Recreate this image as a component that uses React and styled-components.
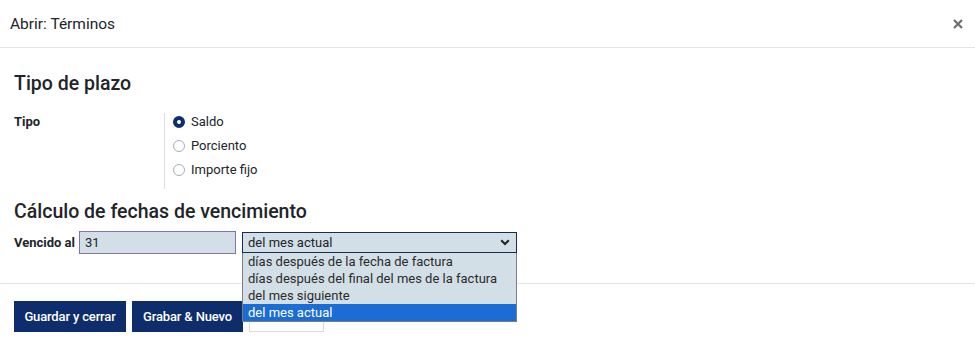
import React from "react";
import styled, { createGlobalStyle } from "styled-components";

const Global = createGlobalStyle`
  html, body { margin: 0; padding: 0; background: #fff; }
  body { font-family: Roboto, "Liberation Sans", Arial, sans-serif; color: #212529; }
  * { box-sizing: border-box; }
`;

const Modal = styled.div`
  width: 975px;
  height: 348px;
  background: #fff;
  overflow: hidden;
`;

const Header = styled.div`
  height: 48px;
  display: flex;
  align-items: center;
  justify-content: space-between;
  padding: 1px 11px 0 10px;
  border-bottom: 1px solid #e2e4e8;
`;

const Title = styled.div`
  font-size: 15.5px;
  font-weight: 400;
  color: #212529;
`;

const Close = styled.button`
  border: 0;
  background: none;
  padding: 0;
  width: 12px;
  height: 12px;
  display: flex;
  align-items: center;
  justify-content: center;
  cursor: pointer;
`;

const Body = styled.div`
  padding: 24px 14px 29px;
`;

const SectionTitle = styled.h2`
  margin: ${(p) => p.$mt || 0}px 0 0;
  font-size: 19.5px;
  line-height: 23px;
  font-weight: 500;
  color: #212529;
`;

const FieldRow = styled.div`
  display: grid;
  grid-template-columns: 150px 1fr;
  margin-top: 18px;
`;

const Label = styled.div`
  font-size: 13px;
  line-height: 18px;
  font-weight: 700;
  color: #212529;
`;

const RadioGroup = styled.div`
  border-left: 1px solid #dcdfe3;
  padding: 0 0 10px 8px;
  display: flex;
  flex-direction: column;
  gap: 6px;
`;

const RadioRow = styled.label`
  display: flex;
  align-items: center;
  gap: 6px;
  font-size: 13px;
  line-height: 18px;
  color: #212529;
`;

const RadioDot = styled.span`
  width: 12px;
  height: 12px;
  border-radius: 50%;
  flex: none;
  border: ${(p) => (p.$checked ? "4px solid #0d2d6c" : "1px solid #a9adb3")};
  background: #fff;
`;

const DueRow = styled.div`
  display: flex;
  align-items: flex-start;
  margin-top: 8px;
`;

const DueLabel = styled(Label)`
  line-height: 23px;
  margin-right: 4px;
`;

const NumberInput = styled.div`
  width: 157px;
  height: 23px;
  background: #d2dfe6;
  border: 1px solid #7f74ad;
  font-size: 13px;
  line-height: 21px;
  padding-left: 5px;
  color: #212529;
`;

const SelectWrap = styled.div`
  position: relative;
  margin-left: 6px;
  margin-top: 1px;
`;

const SelectBox = styled.div`
  width: 275px;
  height: 21px;
  background: #d2dfe6;
  border: 1px solid #1b2a52;
  display: flex;
  align-items: center;
  justify-content: space-between;
  padding: 0 6px 0 5px;
  font-size: 13px;
  color: #212529;
`;

const Options = styled.ul`
  position: absolute;
  left: 0;
  top: 21px;
  width: 275px;
  margin: 0;
  padding: 0;
  list-style: none;
  background: #d2dfe6;
  border: 1px solid #7a7d82;
  border-top: 0;
  z-index: 5;
`;

const Option = styled.li`
  height: 17px;
  line-height: 17px;
  padding-left: 5px;
  font-size: 13px;
  color: ${(p) => (p.$selected ? "#fff" : "#2b2b2b")};
  background: ${(p) => (p.$selected ? "#1c6cd6" : "transparent")};
`;

const Footer = styled.div`
  border-top: 1px solid #e2e4e8;
  padding: 17px 14px;
  display: flex;
  gap: 6px;
`;

const Button = styled.button`
  height: 31px;
  width: ${(p) => p.$w}px;
  padding: 0;
  border: 1px solid ${(p) => (p.$light ? "#d9dcdf" : "#0d2d6c")};
  background: ${(p) => (p.$light ? "#fff" : "#0d2d6c")};
  color: ${(p) => (p.$light ? "#212529" : "#fff")};
  font-family: Roboto, "Liberation Sans", Arial, sans-serif;
  font-size: 13px;
  font-weight: 500;
  letter-spacing: -0.15px;
  border-radius: 0;
  cursor: pointer;
`;

const options = [
  "días después de la fecha de factura",
  "días después del final del mes de la factura",
  "del mes siguiente",
  "del mes actual",
];

export default function App() {
  return (
    <>
      <Global />
      <Modal>
        <Header>
          <Title>Abrir: Términos</Title>
          <Close aria-label="Cerrar">
            <svg width="10" height="10" viewBox="0 0 10 10">
              <path d="M1 1 L9 9 M9 1 L1 9" stroke="#6c6f73" strokeWidth="2.2" strokeLinecap="butt" />
            </svg>
          </Close>
        </Header>
        <Body>
          <SectionTitle>Tipo de plazo</SectionTitle>
          <FieldRow>
            <Label>Tipo</Label>
            <RadioGroup>
              <RadioRow><RadioDot $checked />Saldo</RadioRow>
              <RadioRow><RadioDot />Porciento</RadioRow>
              <RadioRow><RadioDot />Importe fijo</RadioRow>
            </RadioGroup>
          </FieldRow>
          <SectionTitle $mt={11}>Cálculo de fechas de vencimiento</SectionTitle>
          <DueRow>
            <DueLabel>Vencido al</DueLabel>
            <NumberInput>31</NumberInput>
            <SelectWrap>
              <SelectBox>
                <span>del mes actual</span>
                <svg width="10" height="7" viewBox="0 0 10 7">
                  <path d="M1.2 1.2 L5 5 L8.8 1.2" fill="none" stroke="#222" strokeWidth="2" />
                </svg>
              </SelectBox>
              <Options>
                {options.map((o, i) => (
                  <Option key={o} $selected={i === 3}>{o}</Option>
                ))}
              </Options>
            </SelectWrap>
          </DueRow>
        </Body>
        <Footer>
          <Button $w={112}>Guardar y cerrar</Button>
          <Button $w={111}>Grabar &amp; Nuevo</Button>
          <Button $light $w={75} aria-label="Cancelar" />
        </Footer>
      </Modal>
    </>
  );
}
